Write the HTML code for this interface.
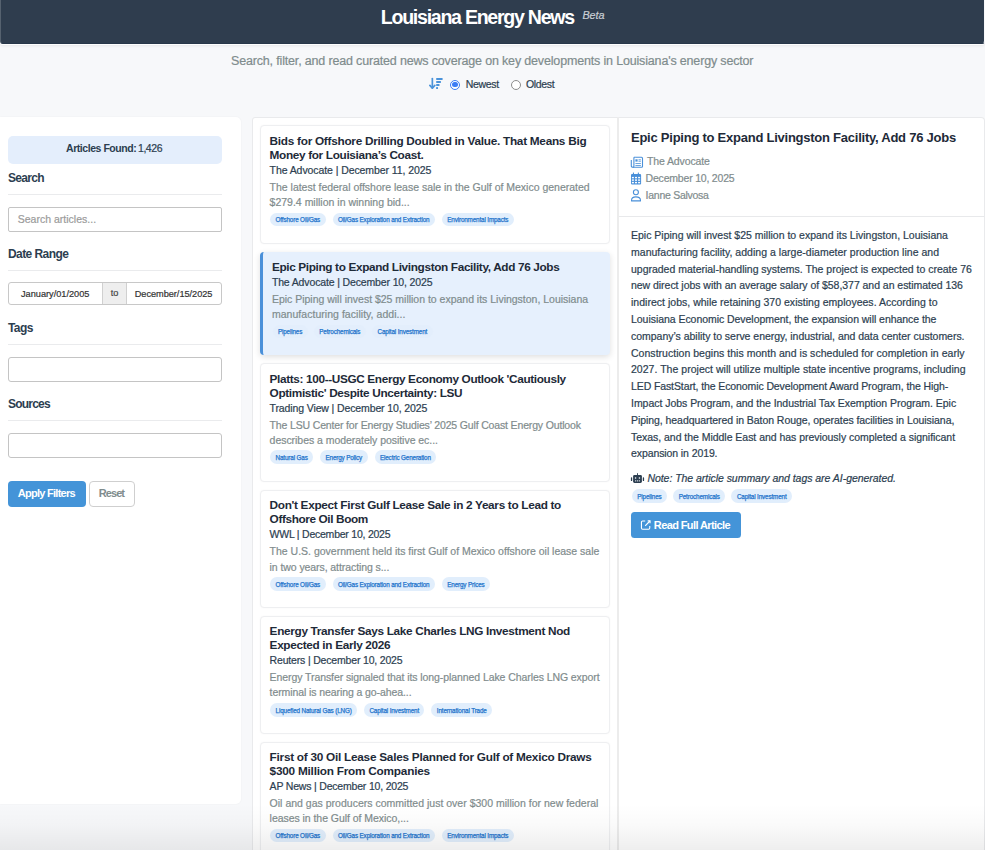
<!DOCTYPE html>
<html><head><meta charset="utf-8"><title>Louisiana Energy News</title>
<style>
html,body{margin:0;padding:0;}
body{width:985px;height:850px;overflow:hidden;position:relative;background:#f7f8fa;font-family:"Liberation Sans", sans-serif;}
.t{position:absolute;white-space:nowrap;}
</style></head><body>
<div style="position:absolute;left:0px;top:0px;width:985px;height:43.6px;box-sizing:border-box;background:#2f3d4e;border-left:1px solid #56626f;border-right:1px solid #f7f8fa;border-bottom:1px solid #28374a;border-radius:0 0 3px 3px;box-shadow:0 1px 0 rgba(255,255,255,0.9), 0 2px 3px rgba(0,0,0,0.07);"></div>
<div class="t" style="left:380.80px;top:8.31px;font-size:19.6px;line-height:19.6px;color:#ffffff;font-weight:700;letter-spacing:-1.28px;">Louisiana Energy News</div>
<div class="t" style="left:582.50px;top:9.96px;font-size:10.8px;line-height:10.8px;color:#c9ced4;letter-spacing:-0.1px;font-style:italic;-webkit-text-stroke:0.2px #c9ced4;">Beta</div>
<div class="t" style="left:231.00px;top:54.52px;font-size:12.5px;line-height:12.5px;color:#7f8c8d;letter-spacing:-0.166px;-webkit-text-stroke:0.2px #7f8c8d;">Search, filter, and read curated news coverage on key developments in Louisiana's energy sector</div>
<svg style="position:absolute;left:429px;top:77px" width="15" height="13" viewBox="0 0 15 13">
<path d="M3.35 1.6 V10.8" stroke="#4a93da" stroke-width="1.7" stroke-linecap="round" fill="none"/>
<path d="M0.9 8.4 L3.35 11.2 L5.8 8.4" stroke="#4a93da" stroke-width="1.7" stroke-linecap="round" stroke-linejoin="round" fill="none"/>
<rect x="7.1" y="1.1" width="6.6" height="1.8" rx="0.6" fill="#4a93da"/>
<rect x="7.1" y="4.1" width="4.9" height="1.8" rx="0.6" fill="#4a93da"/>
<rect x="7.1" y="7.1" width="3.5" height="1.8" rx="0.6" fill="#4a93da"/>
<rect x="7.1" y="10.1" width="1.9" height="1.8" rx="0.5" fill="#4a93da"/>
</svg>
<div style="position:absolute;left:450px;top:79.8px;width:10px;height:10px;border-radius:50%;border:1px solid #3b7cf5;box-sizing:border-box;background:#fff"></div>
<div style="position:absolute;left:452.3px;top:82.1px;width:5.4px;height:5.4px;border-radius:50%;background:#3b7cf5"></div>
<div class="t" style="left:465.70px;top:79.41px;font-size:10.5px;line-height:10.5px;color:#2c3e50;letter-spacing:-0.3px;-webkit-text-stroke:0.2px #2c3e50;">Newest</div>
<div style="position:absolute;left:510.5px;top:79.8px;width:10px;height:10px;border-radius:50%;border:1px solid #8c8c8c;box-sizing:border-box;background:#fff"></div>
<div class="t" style="left:526.00px;top:79.41px;font-size:10.5px;line-height:10.5px;color:#2c3e50;letter-spacing:-0.35px;-webkit-text-stroke:0.2px #2c3e50;">Oldest</div>
<div style="position:absolute;left:0px;top:117px;width:241px;height:687px;box-sizing:border-box;background:#fff;border-radius:0 5px 5px 0;box-shadow:0 0 2px rgba(0,0,0,0.06);"></div>
<div style="position:absolute;left:8px;top:136px;width:214px;height:28px;box-sizing:border-box;background:#e4eefc;border-radius:5px;"></div>
<div class="t" style="left:66.00px;top:143.41px;font-size:10.5px;line-height:10.5px;color:#2c3e50;font-weight:700;letter-spacing:-0.45px;">Articles Found:</div>
<div class="t" style="left:138.00px;top:143.41px;font-size:10.5px;line-height:10.5px;color:#2c3e50;letter-spacing:-0.45px;-webkit-text-stroke:0.2px #2c3e50;">1,426</div>
<div class="t" style="left:8.00px;top:171.94px;font-size:12px;line-height:12px;color:#2c3e50;font-weight:700;letter-spacing:-0.7px;">Search</div>
<div style="position:absolute;left:8px;top:194px;width:214px;height:1px;box-sizing:border-box;background:#eaebed;"></div>
<div style="position:absolute;left:8px;top:207px;width:214px;height:25px;box-sizing:border-box;border:1px solid #c4c4c4;border-radius:2px;background:#fff;"></div>
<div class="t" style="left:17.70px;top:214.41px;font-size:10.5px;line-height:10.5px;color:#9b9b9b;letter-spacing:0.012px;-webkit-text-stroke:0.2px #9b9b9b;">Search articles...</div>
<div class="t" style="left:8.00px;top:248.14px;font-size:12px;line-height:12px;color:#2c3e50;font-weight:700;letter-spacing:-0.572px;">Date Range</div>
<div style="position:absolute;left:8px;top:270px;width:214px;height:1px;box-sizing:border-box;background:#eaebed;"></div>
<div style="position:absolute;left:8px;top:282px;width:214px;height:22.5px;box-sizing:border-box;border:1px solid #c8c8c8;border-radius:3px;background:#fff;"></div>
<div style="position:absolute;left:102px;top:283px;width:24.5px;height:20.5px;box-sizing:border-box;background:#eeeeee;border-left:1px solid #d0d0d0;border-right:1px solid #d0d0d0;"></div>
<div class="t" style="left:21.00px;top:289.51px;font-size:9.2px;line-height:9.2px;color:#333333;-webkit-text-stroke:0.2px #333333;">January/01/2005</div>
<div class="t" style="left:110.80px;top:288.51px;font-size:9.2px;line-height:9.2px;color:#444444;-webkit-text-stroke:0.2px #444444;">to</div>
<div class="t" style="left:134.70px;top:289.51px;font-size:9.2px;line-height:9.2px;color:#333333;letter-spacing:-0.026px;-webkit-text-stroke:0.2px #333333;">December/15/2025</div>
<div class="t" style="left:8.00px;top:321.64px;font-size:12px;line-height:12px;color:#2c3e50;font-weight:700;letter-spacing:-0.567px;">Tags</div>
<div style="position:absolute;left:8px;top:344px;width:214px;height:1px;box-sizing:border-box;background:#eaebed;"></div>
<div style="position:absolute;left:8px;top:356.5px;width:214px;height:25px;box-sizing:border-box;border:1px solid #c4c4c4;border-radius:3px;background:#fff;"></div>
<div class="t" style="left:8.00px;top:398.44px;font-size:12px;line-height:12px;color:#2c3e50;font-weight:700;letter-spacing:-0.8px;">Sources</div>
<div style="position:absolute;left:8px;top:420px;width:214px;height:1px;box-sizing:border-box;background:#eaebed;"></div>
<div style="position:absolute;left:8px;top:432.5px;width:214px;height:25px;box-sizing:border-box;border:1px solid #c4c4c4;border-radius:3px;background:#fff;"></div>
<div style="position:absolute;left:8px;top:481px;width:78px;height:26px;box-sizing:border-box;background:#4494d8;border-radius:4px;"></div>
<div class="t" style="left:17.80px;top:487.99px;font-size:11px;line-height:11px;color:#ffffff;font-weight:700;letter-spacing:-0.733px;">Apply Filters</div>
<div style="position:absolute;left:89.3px;top:481px;width:45.5px;height:26px;box-sizing:border-box;border:1px solid #cfcfcf;border-radius:4px;background:#fff;"></div>
<div class="t" style="left:98.80px;top:487.99px;font-size:11px;line-height:11px;color:#7f8c8d;font-weight:700;letter-spacing:-0.95px;">Reset</div>
<div style="position:absolute;left:252px;top:117px;width:367px;height:760px;box-sizing:border-box;background:#fff;border:1px solid #e9eaec;border-radius:3px 0 0 0;"></div>
<div style="position:absolute;left:260px;top:125px;width:350px;height:119px;box-sizing:border-box;background:#fff;border:1px solid #eeeff1;border-radius:4px;box-shadow:0 0 2px rgba(0,0,0,0.04);"></div>
<div class="t" style="left:269.60px;top:135.71px;font-size:11.8px;line-height:11.8px;color:#1e2a38;font-weight:700;letter-spacing:-0.275px;">Bids for Offshore Drilling Doubled in Value. That Means Big</div>
<div class="t" style="left:269.60px;top:149.71px;font-size:11.8px;line-height:11.8px;color:#1e2a38;font-weight:700;letter-spacing:-0.344px;">Money for Louisiana’s Coast.</div>
<div class="t" style="left:269.60px;top:164.91px;font-size:10.5px;line-height:10.5px;color:#2c3e50;letter-spacing:-0.082px;-webkit-text-stroke:0.2px #2c3e50;">The Advocate | December 11, 2025</div>
<div class="t" style="left:269.60px;top:181.91px;font-size:10.5px;line-height:10.5px;color:#7f8c8d;letter-spacing:-0.012px;-webkit-text-stroke:0.2px #7f8c8d;">The latest federal offshore lease sale in the Gulf of Mexico generated</div>
<div class="t" style="left:269.60px;top:197.11px;font-size:10.5px;line-height:10.5px;color:#7f8c8d;-webkit-text-stroke:0.2px #7f8c8d;">$279.4 million in winning bid...</div>
<div style="position:absolute;left:270.20000000000005px;top:212.6px;width:55.346875px;height:13.8px;box-sizing:border-box;background:#e1eefc;border-radius:7px;"></div>
<div class="t" style="left:275.60px;top:217.37px;font-size:6.3px;line-height:6.3px;color:#1f74cc;letter-spacing:-0.14px;-webkit-text-stroke:0.25px #1f74cc;">Offshore Oil/Gas</div>
<div style="position:absolute;left:332.54687500000006px;top:212.6px;width:102.3px;height:13.8px;box-sizing:border-box;background:#e1eefc;border-radius:7px;"></div>
<div class="t" style="left:337.95px;top:217.37px;font-size:6.3px;line-height:6.3px;color:#1f74cc;letter-spacing:-0.14px;-webkit-text-stroke:0.25px #1f74cc;">Oil/Gas Exploration and Extraction</div>
<div style="position:absolute;left:441.84687500000007px;top:212.6px;width:71.909375px;height:13.8px;box-sizing:border-box;background:#e1eefc;border-radius:7px;"></div>
<div class="t" style="left:447.25px;top:217.37px;font-size:6.3px;line-height:6.3px;color:#1f74cc;letter-spacing:-0.14px;-webkit-text-stroke:0.25px #1f74cc;">Environmental Impacts</div>
<div style="position:absolute;left:260px;top:252px;width:350px;height:103px;box-sizing:border-box;background:#e6f0fd;border-left:3px solid #4a90d9;border-radius:4px;box-shadow:0 2px 6px rgba(0,0,0,0.13);"></div>
<div class="t" style="left:271.90px;top:261.71px;font-size:11.8px;line-height:11.8px;color:#1e2a38;font-weight:700;letter-spacing:-0.357px;">Epic Piping to Expand Livingston Facility, Add 76 Jobs</div>
<div class="t" style="left:271.90px;top:276.91px;font-size:10.5px;line-height:10.5px;color:#2c3e50;letter-spacing:-0.141px;-webkit-text-stroke:0.2px #2c3e50;">The Advocate | December 10, 2025</div>
<div class="t" style="left:271.90px;top:293.91px;font-size:10.5px;line-height:10.5px;color:#7f8c8d;letter-spacing:-0.01px;-webkit-text-stroke:0.2px #7f8c8d;">Epic Piping will invest $25 million to expand its Livingston, Louisiana</div>
<div class="t" style="left:271.90px;top:309.11px;font-size:10.5px;line-height:10.5px;color:#7f8c8d;letter-spacing:0.04px;-webkit-text-stroke:0.2px #7f8c8d;">manufacturing facility, addi...</div>
<div style="position:absolute;left:272.50000000000006px;top:324.59999999999997px;width:35.096875px;height:13.8px;box-sizing:border-box;background:#e3eefc;border-radius:7px;"></div>
<div class="t" style="left:277.90px;top:329.37px;font-size:6.3px;line-height:6.3px;color:#1f74cc;letter-spacing:-0.14px;-webkit-text-stroke:0.25px #1f74cc;">Pipelines</div>
<div style="position:absolute;left:313.896875px;top:324.59999999999997px;width:51.89375px;height:13.8px;box-sizing:border-box;background:#e3eefc;border-radius:7px;"></div>
<div class="t" style="left:319.30px;top:329.37px;font-size:6.3px;line-height:6.3px;color:#1f74cc;letter-spacing:-0.14px;-webkit-text-stroke:0.25px #1f74cc;">Petrochemicals</div>
<div style="position:absolute;left:372.09062500000005px;top:324.59999999999997px;width:60.440625px;height:13.8px;box-sizing:border-box;background:#e3eefc;border-radius:7px;"></div>
<div class="t" style="left:377.49px;top:329.37px;font-size:6.3px;line-height:6.3px;color:#1f74cc;letter-spacing:-0.14px;-webkit-text-stroke:0.25px #1f74cc;">Capital Investment</div>
<div style="position:absolute;left:260px;top:363px;width:350px;height:119px;box-sizing:border-box;background:#fff;border:1px solid #eeeff1;border-radius:4px;box-shadow:0 0 2px rgba(0,0,0,0.04);"></div>
<div class="t" style="left:269.60px;top:373.51px;font-size:11.8px;line-height:11.8px;color:#1e2a38;font-weight:700;letter-spacing:-0.359px;">Platts: 100--USGC Energy Economy Outlook 'Cautiously</div>
<div class="t" style="left:269.60px;top:387.51px;font-size:11.8px;line-height:11.8px;color:#1e2a38;font-weight:700;letter-spacing:-0.352px;">Optimistic' Despite Uncertainty: LSU</div>
<div class="t" style="left:269.60px;top:402.71px;font-size:10.5px;line-height:10.5px;color:#2c3e50;letter-spacing:-0.122px;-webkit-text-stroke:0.2px #2c3e50;">Trading View | December 10, 2025</div>
<div class="t" style="left:269.60px;top:419.71px;font-size:10.5px;line-height:10.5px;color:#7f8c8d;letter-spacing:-0.153px;-webkit-text-stroke:0.2px #7f8c8d;">The LSU Center for Energy Studies’ 2025 Gulf Coast Energy Outlook</div>
<div class="t" style="left:269.60px;top:434.91px;font-size:10.5px;line-height:10.5px;color:#7f8c8d;letter-spacing:-0.04px;-webkit-text-stroke:0.2px #7f8c8d;">describes a moderately positive ec...</div>
<div style="position:absolute;left:270.20000000000005px;top:450.4px;width:42.8625px;height:13.8px;box-sizing:border-box;background:#e1eefc;border-radius:7px;"></div>
<div class="t" style="left:275.60px;top:455.17px;font-size:6.3px;line-height:6.3px;color:#1f74cc;letter-spacing:-0.14px;-webkit-text-stroke:0.25px #1f74cc;">Natural Gas</div>
<div style="position:absolute;left:320.06250000000006px;top:450.4px;width:47.4875px;height:13.8px;box-sizing:border-box;background:#e1eefc;border-radius:7px;"></div>
<div class="t" style="left:325.46px;top:455.17px;font-size:6.3px;line-height:6.3px;color:#1f74cc;letter-spacing:-0.14px;-webkit-text-stroke:0.25px #1f74cc;">Energy Policy</div>
<div style="position:absolute;left:374.55000000000007px;top:450.4px;width:61.690625px;height:13.8px;box-sizing:border-box;background:#e1eefc;border-radius:7px;"></div>
<div class="t" style="left:379.95px;top:455.17px;font-size:6.3px;line-height:6.3px;color:#1f74cc;letter-spacing:-0.14px;-webkit-text-stroke:0.25px #1f74cc;">Electric Generation</div>
<div style="position:absolute;left:260px;top:490px;width:350px;height:118px;box-sizing:border-box;background:#fff;border:1px solid #eeeff1;border-radius:4px;box-shadow:0 0 2px rgba(0,0,0,0.04);"></div>
<div class="t" style="left:269.60px;top:500.11px;font-size:11.8px;line-height:11.8px;color:#1e2a38;font-weight:700;letter-spacing:-0.322px;">Don't Expect First Gulf Lease Sale in 2 Years to Lead to</div>
<div class="t" style="left:269.60px;top:514.11px;font-size:11.8px;line-height:11.8px;color:#1e2a38;font-weight:700;letter-spacing:-0.387px;">Offshore Oil Boom</div>
<div class="t" style="left:269.60px;top:529.31px;font-size:10.5px;line-height:10.5px;color:#2c3e50;letter-spacing:-0.232px;-webkit-text-stroke:0.2px #2c3e50;">WWL | December 10, 2025</div>
<div class="t" style="left:269.60px;top:546.31px;font-size:10.5px;line-height:10.5px;color:#7f8c8d;letter-spacing:-0.005px;-webkit-text-stroke:0.2px #7f8c8d;">The U.S. government held its first Gulf of Mexico offshore oil lease sale</div>
<div class="t" style="left:269.60px;top:561.51px;font-size:10.5px;line-height:10.5px;color:#7f8c8d;letter-spacing:-0.079px;-webkit-text-stroke:0.2px #7f8c8d;">in two years, attracting s...</div>
<div style="position:absolute;left:270.20000000000005px;top:577.0px;width:55.346875px;height:13.8px;box-sizing:border-box;background:#e1eefc;border-radius:7px;"></div>
<div class="t" style="left:275.60px;top:581.77px;font-size:6.3px;line-height:6.3px;color:#1f74cc;letter-spacing:-0.14px;-webkit-text-stroke:0.25px #1f74cc;">Offshore Oil/Gas</div>
<div style="position:absolute;left:332.54687500000006px;top:577.0px;width:102.3px;height:13.8px;box-sizing:border-box;background:#e1eefc;border-radius:7px;"></div>
<div class="t" style="left:337.95px;top:581.77px;font-size:6.3px;line-height:6.3px;color:#1f74cc;letter-spacing:-0.14px;-webkit-text-stroke:0.25px #1f74cc;">Oil/Gas Exploration and Extraction</div>
<div style="position:absolute;left:441.84687500000007px;top:577.0px;width:48.190625px;height:13.8px;box-sizing:border-box;background:#e1eefc;border-radius:7px;"></div>
<div class="t" style="left:447.25px;top:581.77px;font-size:6.3px;line-height:6.3px;color:#1f74cc;letter-spacing:-0.14px;-webkit-text-stroke:0.25px #1f74cc;">Energy Prices</div>
<div style="position:absolute;left:260px;top:616px;width:350px;height:118px;box-sizing:border-box;background:#fff;border:1px solid #eeeff1;border-radius:4px;box-shadow:0 0 2px rgba(0,0,0,0.04);"></div>
<div class="t" style="left:269.60px;top:625.91px;font-size:11.8px;line-height:11.8px;color:#1e2a38;font-weight:700;letter-spacing:-0.327px;">Energy Transfer Says Lake Charles LNG Investment Nod</div>
<div class="t" style="left:269.60px;top:639.91px;font-size:11.8px;line-height:11.8px;color:#1e2a38;font-weight:700;letter-spacing:-0.328px;">Expected in Early 2026</div>
<div class="t" style="left:269.60px;top:655.11px;font-size:10.5px;line-height:10.5px;color:#2c3e50;letter-spacing:-0.174px;-webkit-text-stroke:0.2px #2c3e50;">Reuters | December 10, 2025</div>
<div class="t" style="left:269.60px;top:672.11px;font-size:10.5px;line-height:10.5px;color:#7f8c8d;letter-spacing:-0.081px;-webkit-text-stroke:0.2px #7f8c8d;">Energy Transfer signaled that its long-planned Lake Charles LNG export</div>
<div class="t" style="left:269.60px;top:687.31px;font-size:10.5px;line-height:10.5px;color:#7f8c8d;letter-spacing:-0.09px;-webkit-text-stroke:0.2px #7f8c8d;">terminal is nearing a go-ahea...</div>
<div style="position:absolute;left:270.20000000000005px;top:702.8000000000001px;width:86.83125px;height:13.8px;box-sizing:border-box;background:#e1eefc;border-radius:7px;"></div>
<div class="t" style="left:275.60px;top:707.57px;font-size:6.3px;line-height:6.3px;color:#1f74cc;letter-spacing:-0.14px;-webkit-text-stroke:0.25px #1f74cc;">Liquefied Natural Gas (LNG)</div>
<div style="position:absolute;left:364.03125000000006px;top:702.8000000000001px;width:60.440625px;height:13.8px;box-sizing:border-box;background:#e1eefc;border-radius:7px;"></div>
<div class="t" style="left:369.43px;top:707.57px;font-size:6.3px;line-height:6.3px;color:#1f74cc;letter-spacing:-0.14px;-webkit-text-stroke:0.25px #1f74cc;">Capital Investment</div>
<div style="position:absolute;left:431.47187500000007px;top:702.8000000000001px;width:60.659375px;height:13.8px;box-sizing:border-box;background:#e1eefc;border-radius:7px;"></div>
<div class="t" style="left:436.87px;top:707.57px;font-size:6.3px;line-height:6.3px;color:#1f74cc;letter-spacing:-0.14px;-webkit-text-stroke:0.25px #1f74cc;">International Trade</div>
<div style="position:absolute;left:260px;top:742px;width:350px;height:118px;box-sizing:border-box;background:#fff;border:1px solid #eeeff1;border-radius:4px;box-shadow:0 0 2px rgba(0,0,0,0.04);"></div>
<div class="t" style="left:269.60px;top:751.81px;font-size:11.8px;line-height:11.8px;color:#1e2a38;font-weight:700;letter-spacing:-0.261px;">First of 30 Oil Lease Sales Planned for Gulf of Mexico Draws</div>
<div class="t" style="left:269.60px;top:765.81px;font-size:11.8px;line-height:11.8px;color:#1e2a38;font-weight:700;letter-spacing:-0.232px;">$300 Million From Companies</div>
<div class="t" style="left:269.60px;top:781.01px;font-size:10.5px;line-height:10.5px;color:#2c3e50;letter-spacing:-0.189px;-webkit-text-stroke:0.2px #2c3e50;">AP News | December 10, 2025</div>
<div class="t" style="left:269.60px;top:798.01px;font-size:10.5px;line-height:10.5px;color:#7f8c8d;letter-spacing:0.011px;-webkit-text-stroke:0.2px #7f8c8d;">Oil and gas producers committed just over $300 million for new federal</div>
<div class="t" style="left:269.60px;top:813.21px;font-size:10.5px;line-height:10.5px;color:#7f8c8d;letter-spacing:-0.045px;-webkit-text-stroke:0.2px #7f8c8d;">leases in the Gulf of Mexico,...</div>
<div style="position:absolute;left:270.20000000000005px;top:828.7px;width:55.346875px;height:13.8px;box-sizing:border-box;background:#e1eefc;border-radius:7px;"></div>
<div class="t" style="left:275.60px;top:833.47px;font-size:6.3px;line-height:6.3px;color:#1f74cc;letter-spacing:-0.14px;-webkit-text-stroke:0.25px #1f74cc;">Offshore Oil/Gas</div>
<div style="position:absolute;left:332.54687500000006px;top:828.7px;width:102.3px;height:13.8px;box-sizing:border-box;background:#e1eefc;border-radius:7px;"></div>
<div class="t" style="left:337.95px;top:833.47px;font-size:6.3px;line-height:6.3px;color:#1f74cc;letter-spacing:-0.14px;-webkit-text-stroke:0.25px #1f74cc;">Oil/Gas Exploration and Extraction</div>
<div style="position:absolute;left:441.84687500000007px;top:828.7px;width:71.909375px;height:13.8px;box-sizing:border-box;background:#e1eefc;border-radius:7px;"></div>
<div class="t" style="left:447.25px;top:833.47px;font-size:6.3px;line-height:6.3px;color:#1f74cc;letter-spacing:-0.14px;-webkit-text-stroke:0.25px #1f74cc;">Environmental Impacts</div>
<div style="position:absolute;left:617px;top:117px;width:368px;height:760px;box-sizing:border-box;background:#fff;border:1px solid #e9eaec;border-left:2px solid #ececec;border-radius:0 4px 0 0;"></div>
<div class="t" style="left:631.00px;top:130.50px;font-size:13px;line-height:13px;color:#1e2a38;font-weight:700;letter-spacing:-0.244px;">Epic Piping to Expand Livingston Facility, Add 76 Jobs</div>
<svg style="position:absolute;left:630px;top:156px" width="14" height="13" viewBox="0 0 14 13">
<path d="M5.2 1.3 H11.5 Q12.5 1.3 12.5 2.3 V10.4 Q12.5 11.3 11.5 11.3 H2.9 Q1.3 11.3 1.3 9.7 V4 " fill="none" stroke="#4a90d9" stroke-width="1.1"/>
<path d="M3.9 1.3 H5.3 M3.9 1.3 V9.9 Q3.9 11.3 2.9 11.3" fill="none" stroke="#4a90d9" stroke-width="1.1"/>
<rect x="5.4" y="3.3" width="2.2" height="2.3" fill="#4a90d9"/>
<rect x="8.5" y="3.4" width="2.4" height="0.8" fill="#4a90d9"/>
<rect x="8.5" y="4.8" width="2.4" height="0.8" fill="#4a90d9"/>
<rect x="5.4" y="7.2" width="5.5" height="0.8" fill="#4a90d9"/>
<rect x="5.4" y="9.2" width="5.5" height="0.8" fill="#4a90d9"/>
</svg>
<div class="t" style="left:647.00px;top:156.21px;font-size:10.5px;line-height:10.5px;color:#7f8c8d;letter-spacing:-0.119px;-webkit-text-stroke:0.2px #7f8c8d;">The Advocate</div>
<svg style="position:absolute;left:630px;top:172px" width="12" height="13" viewBox="0 0 12 13">
<rect x="1" y="2" width="10.1" height="10.5" rx="1.1" fill="#4a90d9"/>
<rect x="2.9" y="0.4" width="1.1" height="2.4" rx="0.4" fill="#4a90d9"/>
<rect x="7.8" y="0.4" width="1.1" height="2.4" rx="0.4" fill="#4a90d9"/>
<g fill="#fff">
<rect x="1.9" y="4.9" width="2" height="1.4"/><rect x="5" y="4.9" width="2" height="1.4"/><rect x="8.1" y="4.9" width="2" height="1.4"/>
<rect x="1.9" y="7.4" width="2" height="1.4"/><rect x="5" y="7.4" width="2" height="1.4"/><rect x="8.1" y="7.4" width="2" height="1.4"/>
<rect x="1.9" y="9.9" width="2" height="1.4"/><rect x="5" y="9.9" width="2" height="1.4"/><rect x="8.1" y="9.9" width="2" height="1.4"/>
</g>
</svg>
<div class="t" style="left:645.60px;top:173.01px;font-size:10.5px;line-height:10.5px;color:#7f8c8d;letter-spacing:-0.2px;-webkit-text-stroke:0.2px #7f8c8d;">December 10, 2025</div>
<svg style="position:absolute;left:630px;top:188px" width="12" height="14" viewBox="0 0 12 14">
<circle cx="5.9" cy="4.2" r="2.5" fill="none" stroke="#4a90d9" stroke-width="1.1"/>
<path d="M1.55 12.9 V12.3 Q1.55 8.9 5.9 8.9 Q10.45 8.9 10.45 12.3 V12.9 Z" fill="none" stroke="#4a90d9" stroke-width="1.1" stroke-linejoin="round"/>
</svg>
<div class="t" style="left:645.60px;top:189.71px;font-size:10.5px;line-height:10.5px;color:#7f8c8d;letter-spacing:-0.267px;-webkit-text-stroke:0.2px #7f8c8d;">Ianne Salvosa</div>
<div style="position:absolute;left:619px;top:216px;width:365px;height:1px;box-sizing:border-box;background:#e8e9eb;"></div>
<div class="t" style="left:631.00px;top:229.91px;font-size:10.5px;line-height:10.5px;color:#2c3e50;-webkit-text-stroke:0.2px #2c3e50;">Epic Piping will invest $25 million to expand its Livingston, Louisiana</div>
<div class="t" style="left:631.00px;top:246.71px;font-size:10.5px;line-height:10.5px;color:#2c3e50;letter-spacing:0.027px;-webkit-text-stroke:0.2px #2c3e50;">manufacturing facility, adding a large-diameter production line and</div>
<div class="t" style="left:631.00px;top:263.51px;font-size:10.5px;line-height:10.5px;color:#2c3e50;letter-spacing:-0.014px;-webkit-text-stroke:0.2px #2c3e50;">upgraded material-handling systems. The project is expected to create 76</div>
<div class="t" style="left:631.00px;top:280.31px;font-size:10.5px;line-height:10.5px;color:#2c3e50;letter-spacing:-0.038px;-webkit-text-stroke:0.2px #2c3e50;">new direct jobs with an average salary of $58,377 and an estimated 136</div>
<div class="t" style="left:631.00px;top:297.11px;font-size:10.5px;line-height:10.5px;color:#2c3e50;letter-spacing:0.019px;-webkit-text-stroke:0.2px #2c3e50;">indirect jobs, while retaining 370 existing employees. According to</div>
<div class="t" style="left:631.00px;top:313.91px;font-size:10.5px;line-height:10.5px;color:#2c3e50;letter-spacing:-0.045px;-webkit-text-stroke:0.2px #2c3e50;">Louisiana Economic Development, the expansion will enhance the</div>
<div class="t" style="left:631.00px;top:330.71px;font-size:10.5px;line-height:10.5px;color:#2c3e50;letter-spacing:-0.023px;-webkit-text-stroke:0.2px #2c3e50;">company’s ability to serve energy, industrial, and data center customers.</div>
<div class="t" style="left:631.00px;top:347.51px;font-size:10.5px;line-height:10.5px;color:#2c3e50;letter-spacing:0.029px;-webkit-text-stroke:0.2px #2c3e50;">Construction begins this month and is scheduled for completion in early</div>
<div class="t" style="left:631.00px;top:364.31px;font-size:10.5px;line-height:10.5px;color:#2c3e50;letter-spacing:0.027px;-webkit-text-stroke:0.2px #2c3e50;">2027. The project will utilize multiple state incentive programs, including</div>
<div class="t" style="left:631.00px;top:381.11px;font-size:10.5px;line-height:10.5px;color:#2c3e50;letter-spacing:-0.104px;-webkit-text-stroke:0.2px #2c3e50;">LED FastStart, the Economic Development Award Program, the High-</div>
<div class="t" style="left:631.00px;top:397.91px;font-size:10.5px;line-height:10.5px;color:#2c3e50;letter-spacing:-0.031px;-webkit-text-stroke:0.2px #2c3e50;">Impact Jobs Program, and the Industrial Tax Exemption Program. Epic</div>
<div class="t" style="left:631.00px;top:414.71px;font-size:10.5px;line-height:10.5px;color:#2c3e50;letter-spacing:-0.059px;-webkit-text-stroke:0.2px #2c3e50;">Piping, headquartered in Baton Rouge, operates facilities in Louisiana,</div>
<div class="t" style="left:631.00px;top:431.51px;font-size:10.5px;line-height:10.5px;color:#2c3e50;letter-spacing:-0.032px;-webkit-text-stroke:0.2px #2c3e50;">Texas, and the Middle East and has previously completed a significant</div>
<div class="t" style="left:631.00px;top:448.31px;font-size:10.5px;line-height:10.5px;color:#2c3e50;letter-spacing:-0.095px;-webkit-text-stroke:0.2px #2c3e50;">expansion in 2019.</div>
<svg style="position:absolute;left:630px;top:472px" width="15" height="12" viewBox="0 0 15 12">
<rect x="7.05" y="1.2" width="0.9" height="2.2" fill="#2c3e50"/>
<rect x="3.1" y="2.9" width="8.8" height="8" rx="1.3" fill="#2c3e50"/>
<rect x="0.9" y="5.3" width="1.3" height="3.7" rx="0.6" fill="#2c3e50"/>
<rect x="12.8" y="5.3" width="1.3" height="3.7" rx="0.6" fill="#2c3e50"/>
<g fill="#c5ccd4"><rect x="4.9" y="5.1" width="1.3" height="1.8"/><rect x="8.8" y="5.1" width="1.3" height="1.8"/>
<rect x="5" y="8.2" width="1.2" height="1.3"/><rect x="6.9" y="8.2" width="1.2" height="1.3"/><rect x="8.8" y="8.2" width="1.2" height="1.3"/></g>
</svg>
<div class="t" style="left:647.40px;top:473.41px;font-size:10.5px;line-height:10.5px;color:#2c3e50;letter-spacing:-0.038px;font-style:italic;-webkit-text-stroke:0.2px #2c3e50;">Note: The article summary and tags are AI-generated.</div>
<div style="position:absolute;left:631.9px;top:489.2px;width:35.096875px;height:13.8px;box-sizing:border-box;background:#e1eefc;border-radius:7px;"></div>
<div class="t" style="left:637.30px;top:494.17px;font-size:6.3px;line-height:6.3px;color:#1f74cc;letter-spacing:-0.14px;-webkit-text-stroke:0.25px #1f74cc;">Pipelines</div>
<div style="position:absolute;left:673.296875px;top:489.2px;width:51.89375px;height:13.8px;box-sizing:border-box;background:#e1eefc;border-radius:7px;"></div>
<div class="t" style="left:678.70px;top:494.17px;font-size:6.3px;line-height:6.3px;color:#1f74cc;letter-spacing:-0.14px;-webkit-text-stroke:0.25px #1f74cc;">Petrochemicals</div>
<div style="position:absolute;left:731.490625px;top:489.2px;width:60.440625px;height:13.8px;box-sizing:border-box;background:#e1eefc;border-radius:7px;"></div>
<div class="t" style="left:736.89px;top:494.17px;font-size:6.3px;line-height:6.3px;color:#1f74cc;letter-spacing:-0.14px;-webkit-text-stroke:0.25px #1f74cc;">Capital Investment</div>
<div style="position:absolute;left:631px;top:512px;width:110px;height:26px;box-sizing:border-box;background:#4494d8;border-radius:3.5px;"></div>
<svg style="position:absolute;left:640px;top:519px" width="12" height="12" viewBox="0 0 12 12">
<path d="M5.2 1.95 H2.6 Q1.45 1.95 1.45 3.1 V9.1 Q1.45 10.25 2.6 10.25 H8.6 Q9.75 10.25 9.75 9.1 V7" fill="none" stroke="#fff" stroke-width="1.1"/>
<path d="M7.7 1.85 H10.05 V4.3" fill="none" stroke="#fff" stroke-width="1.1"/>
<path d="M9.9 2 L5.2 6.8" stroke="#fff" stroke-width="1.1"/>
</svg>
<div class="t" style="left:653.80px;top:520.29px;font-size:11px;line-height:11px;color:#ffffff;font-weight:700;letter-spacing:-0.6px;">Read Full Article</div>
<div style="position:absolute;left:0px;top:804px;width:985px;height:46px;box-sizing:border-box;background:linear-gradient(to bottom, rgba(0,0,0,0) 0%, rgba(0,0,0,0.02) 45%, rgba(0,0,0,0.068) 100%);"></div>
</body></html>
